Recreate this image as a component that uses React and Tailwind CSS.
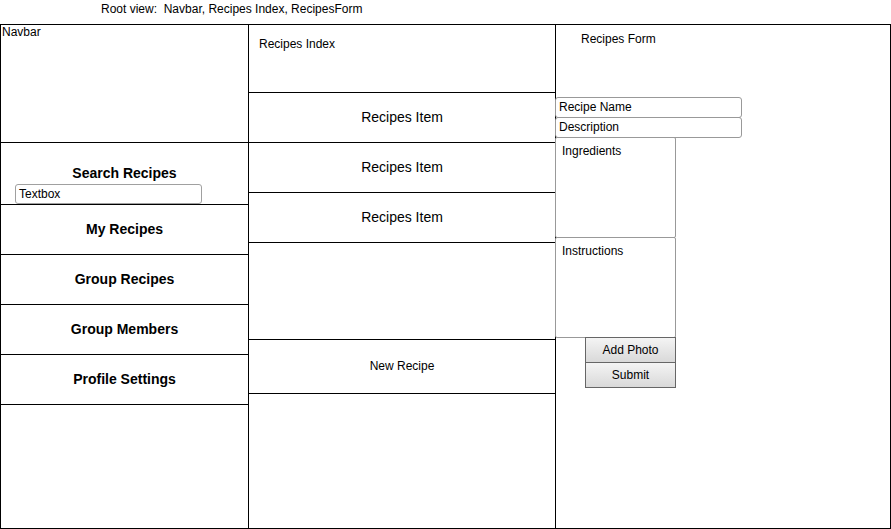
const navItems = ['My Recipes', 'Group Recipes', 'Group Members', 'Profile Settings'];
const recipeItems = ['Recipes Item', 'Recipes Item', 'Recipes Item'];

export default function App() {
  return (
    <div className="h-[529px] w-[891px] overflow-hidden bg-white text-black font-['Liberation_Sans',Arial,sans-serif]">
      <div className="h-[24px] whitespace-pre pl-[101px] pt-[2px] text-[12px] leading-[14px]">
        Root view:  Navbar, Recipes Index, RecipesForm
      </div>

      <div className="flex h-[505px] w-[891px] border border-black">
        {/* navbar */}
        <div className="flex w-[248px] shrink-0 flex-col border-r border-black">
          <div className="h-[118px] border-b border-black pl-[1px] text-[12px] leading-[14px]">Navbar</div>
          <div className="h-[62px] border-b border-black pt-[21px]">
            <p className="text-center text-[14px] font-bold leading-[18px]">Search Recipes</p>
            <div className="ml-[14px] mt-[2px] h-[20px] w-[187px] rounded-[3px] border border-[#a0a0a0] pl-[3px] text-[12px] leading-[18px]">
              Textbox
            </div>
          </div>
          {navItems.map((item) => (
            <div key={item} className="flex h-[50px] items-center justify-center border-b border-black text-[14px] font-bold">
              {item}
            </div>
          ))}
        </div>

        {/* recipes index */}
        <div className="flex w-[307px] shrink-0 flex-col border-r border-black">
          <div className="h-[68px] border-b border-black pl-[10px] pt-[12px] text-[12px] leading-[14px]">Recipes Index</div>
          {recipeItems.map((item, i) => (
            <div key={i} className="flex h-[50px] items-center justify-center border-b border-black text-[14px]">
              {item}
            </div>
          ))}
          <div className="h-[97px] border-b border-black" />
          <div className="flex h-[54px] items-center justify-center border-b border-black pb-[2px] text-[12px]">New Recipe</div>
        </div>

        {/* recipes form */}
        <div className="flex flex-1 flex-col">
          <div className="h-[72px] pl-[25px] pt-[7px] text-[12px] leading-[14px]">Recipes Form</div>
          <div className="-ml-px flex flex-col text-[12px]">
            <div className="h-[21px] w-[187px] rounded-[3px] border border-[#999] pl-[3px] leading-[18px]">Recipe Name</div>
            <div className="-mt-px h-[21px] w-[187px] rounded-[3px] border border-[#999] pl-[3px] leading-[18px]">Description</div>
            <div className="-mt-px h-[101px] w-[121px] rounded-[2px] border border-[#999] pl-[6px] pt-[6px] leading-[14px]">Ingredients</div>
            <div className="-mt-px h-[101px] w-[121px] rounded-[2px] border border-[#999] pl-[6px] pt-[6px] leading-[14px]">Instructions</div>
            <div className="ml-[30px] -mt-px flex h-[26px] w-[91px] items-center justify-center border border-[#666] bg-gradient-to-b from-[#f4f4f4] to-[#d9d9d9]">
              Add Photo
            </div>
            <div className="ml-[30px] -mt-px flex h-[26px] w-[91px] items-center justify-center border border-[#666] bg-gradient-to-b from-[#f4f4f4] to-[#d9d9d9]">
              Submit
            </div>
          </div>
        </div>
      </div>
    </div>
  );
}
